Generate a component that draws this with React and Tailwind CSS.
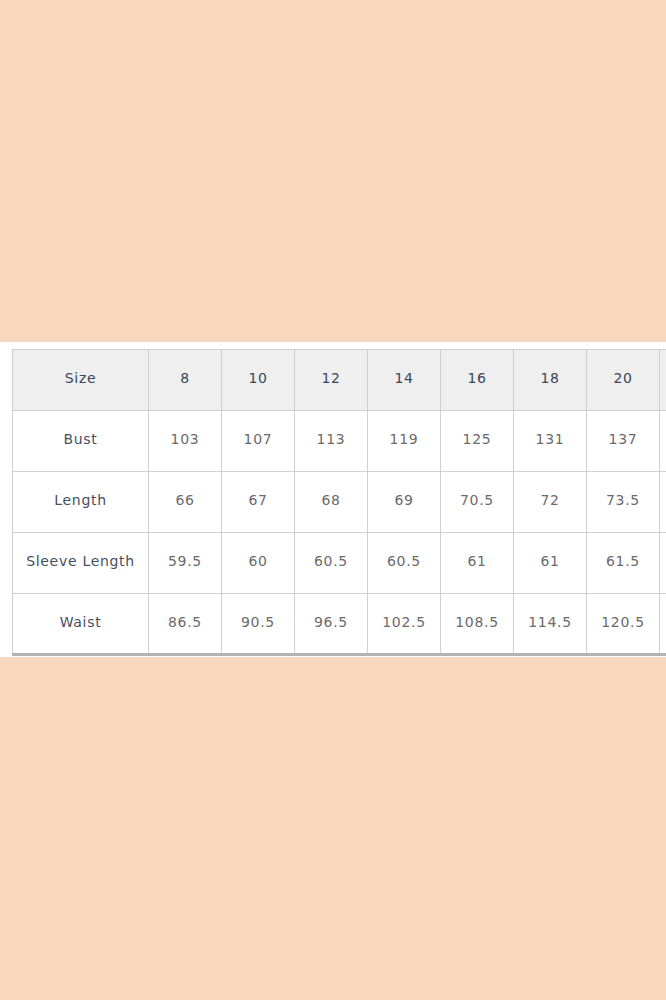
import React from 'react';

const sizes = ['8', '10', '12', '14', '16', '18', '20'];

const rows = [
  { label: 'Bust', values: ['103', '107', '113', '119', '125', '131', '137'] },
  { label: 'Length', values: ['66', '67', '68', '69', '70.5', '72', '73.5'] },
  { label: 'Sleeve Length', values: ['59.5', '60', '60.5', '60.5', '61', '61', '61.5'] },
  { label: 'Waist', values: ['86.5', '90.5', '96.5', '102.5', '108.5', '114.5', '120.5'] },
];

// last column is cut off by the viewport, so it stays empty
const SizeTable = () => {
  return (
    <table className="table-fixed border-collapse border-b-[3px] border-b-[#b3b3b3] text-[14px] tracking-[0.7px] w-[721px]">
      <colgroup>
        <col className="w-[136px]" />
        {sizes.map((s) => (
          <col key={s} className="w-[73px]" />
        ))}
        <col className="w-[73px]" />
      </colgroup>
      <thead>
        <tr className="h-[61px] bg-[#efefef]">
          <th className="border border-[#cfcfcf] border-b-dashed pb-[3px] font-normal text-[#3a475a]">Size</th>
          {sizes.map((s) => (
            <th key={s} className="border border-[#cfcfcf] border-b-dashed pb-[3px] font-normal text-[#3a475a]">
              {s}
            </th>
          ))}
          <th className="border border-[#cfcfcf] border-b-dashed" />
        </tr>
      </thead>
      <tbody>
        {rows.map((r) => (
          <tr key={r.label} className="h-[61px] bg-white">
            <td className="border border-[#cfcfcf] pb-[3px] text-center text-[#454f5e]">{r.label}</td>
            {r.values.map((v, i) => (
              <td key={i} className="border border-[#cfcfcf] pb-[3px] text-center text-[#6a6a6a]">
                {v}
              </td>
            ))}
            <td className="border border-[#cfcfcf]" />
          </tr>
        ))}
      </tbody>
    </table>
  );
};

export default function App() {
  return (
    <div className="w-[666px] h-[1000px] bg-[#f8d7bf] flex flex-col font-['DejaVu_Sans',sans-serif]">
      <div className="h-[342px]" />
      <div className="bg-white pl-[12px] pt-[7px] pb-[1px] overflow-hidden">
        <SizeTable />
      </div>
      <div className="flex-1" />
    </div>
  );
}
